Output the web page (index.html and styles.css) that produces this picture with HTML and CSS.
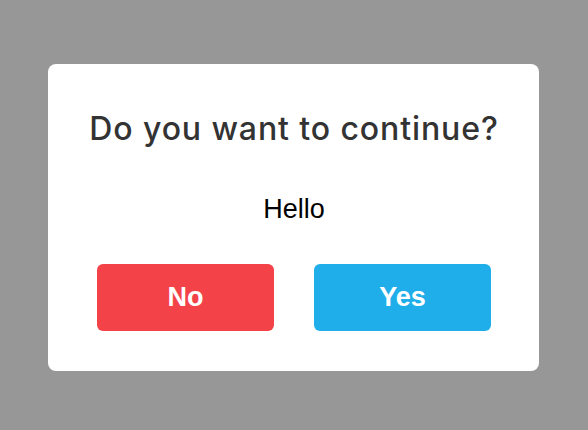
FILE: index.html
```html
<!DOCTYPE html>
<html lang="en">
<head>
    <meta charset="UTF-8">
    <meta name="viewport" content="width=device-width, initial-scale=1.0">
    <title>Confirm</title>
    <link rel="stylesheet" href="styles.css">
</head>
<body>
    <div class="overlay">
        <div class="dialog">
            <h2 class="dialog-title">Do you want to continue?</h2>
            <p class="dialog-message">Hello</p>
            <div class="dialog-actions">
                <button class="btn btn-no">No</button>
                <button class="btn btn-yes">Yes</button>
            </div>
        </div>
    </div>
</body>
</html>
```

FILE: styles.css
```css
body {
    margin: 0;
    padding: 0;
    background-color: #979797;
    font-family: "Liberation Sans", Arial, sans-serif;
}

.overlay {
    height: 430px;
    padding-top: 64px;
    box-sizing: border-box;
}

.dialog {
    width: 491px;
    margin-left: 48px;
    box-sizing: border-box;
    padding: 45px 48px 40px 49px;
    background: #ffffff;
    border-radius: 8px;
}

.dialog-title {
    margin: 0 -20px;
    font-family: Inter, "Liberation Sans", sans-serif;
    font-size: 32px;
    line-height: 40px;
    font-weight: 500;
    letter-spacing: 0.9px;
    color: #333333;
    text-align: center;
}

.dialog-message {
    margin: 44px 0 39px;
    font-size: 27px;
    line-height: 32px;
    color: #000000;
    text-align: center;
}

.dialog-actions {
    display: flex;
    gap: 40px;
}

.btn {
    flex: 1;
    height: 67px;
    border: none;
    border-radius: 6px;
    color: #ffffff;
    font-family: "Liberation Sans", Arial, sans-serif;
    font-size: 27px;
    font-weight: bold;
    cursor: pointer;
}

.btn-no {
    background-color: #f44249;
}

.btn-yes {
    background-color: #1faeea;
}
```
